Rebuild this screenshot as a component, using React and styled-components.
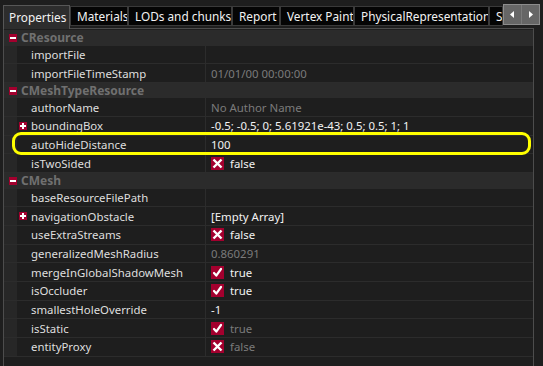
import React from 'react';
import styled, { createGlobalStyle } from 'styled-components';

const GlobalStyle = createGlobalStyle`
  html, body {
    margin: 0;
    padding: 0;
    background: #1e1e1e;
  }
  body {
    font-family: "Noto Sans", "Liberation Sans", sans-serif;
    font-size: 11.4px;
  }
`;

const Window = styled.div`
  width: 543px;
  height: 366px;
  background: #1e1e1e;
  overflow: hidden;
  display: flex;
  flex-direction: column;
`;

const TabStrip = styled.div`
  display: flex;
  align-items: flex-end;
  height: 28px;
  padding-left: 3px;
  position: relative;
  z-index: 2;
`;

const Tab = styled.div`
  flex: 0 0 auto;
  width: ${(p) => p.w}px;
  box-sizing: border-box;
  height: ${(p) => (p.active ? 24 : 20)}px;
  margin-bottom: ${(p) => (p.active ? -1 : 2)}px;
  background: ${(p) => (p.active ? '#2d2d2d' : '#050505')};
  border: 1px solid ${(p) => (p.active ? '#575757' : '#3a3a3a')};
  border-bottom: ${(p) => (p.active ? 'none' : '1px solid #3a3a3a')};
  color: #f2f2f2;
  font-size: 11.8px;
  line-height: ${(p) => (p.active ? 22 : 18)}px;
  padding-left: ${(p) => (p.active ? 5 : 6)}px;
  white-space: nowrap;
  overflow: hidden;
`;

const ScrollButtons = styled.div`
  display: flex;
  margin-left: auto;
  margin-right: 6px;
  margin-bottom: 3px;
  height: 19px;
  background: #7a7a7a;
  border: 1px solid #8c8c8c;
  gap: 1px;
`;

const ScrollBtn = styled.div`
  width: 17px;
  background: #666;
  display: flex;
  align-items: center;
  justify-content: center;
`;

const Panel = styled.div`
  position: relative;
  margin-left: 3px;
  width: 531px;
  flex: 1;
  border: 1px solid #4d4d4d;
  border-bottom: none;
  box-sizing: border-box;
  background: #1e1e1e;
  padding-top: 1px;
`;

const CategoryRow = styled.div`
  display: flex;
  align-items: center;
  height: 15.5px;
  background: #2b2b2b;
  padding-left: 5px;
  gap: 4px;
  color: #707070;
  font-weight: bold;
  font-size: 12px;
`;

const ToggleBox = styled.span`
  width: 8px;
  height: 8px;
  background: #a3002e;
  display: inline-flex;
  align-items: center;
  justify-content: center;
  flex: 0 0 auto;
  position: relative;
  &::before {
    content: '';
    position: absolute;
    width: 6px;
    height: 2px;
    background: #fff;
  }
  &::after {
    content: '';
    position: absolute;
    width: 2px;
    height: 6px;
    background: #fff;
    display: ${(p) => (p.open ? 'none' : 'block')};
  }
`;

const PropRow = styled.div`
  display: grid;
  grid-template-columns: 13px 189px 1fr;
  height: 18.7px;
  box-sizing: border-box;
  border-bottom: 1px solid #2c2c2c;
`;

const Gutter = styled.div`
  background: #272727;
`;

const NameCell = styled.div`
  display: flex;
  align-items: center;
  gap: 4px;
  padding-left: 2px;
  border-right: 1px solid #2c2c2c;
  color: #dedede;
  white-space: nowrap;
  overflow: hidden;
`;

const ExpandSlot = styled.span`
  width: 8px;
  flex: 0 0 auto;
  display: inline-flex;
`;

const ValueCell = styled.div`
  display: flex;
  align-items: center;
  gap: 6px;
  padding-left: 5px;
  color: ${(p) => (p.dim ? '#7b7b7b' : '#f2f2f2')};
  white-space: nowrap;
  overflow: hidden;
`;

const CheckBox = styled.span`
  width: 13px;
  height: 13px;
  background: #a3002e;
  display: inline-flex;
  align-items: center;
  justify-content: center;
  flex: 0 0 auto;
`;

const Highlight = styled.div`
  position: absolute;
  left: 8px;
  top: 103px;
  width: 519px;
  height: 23px;
  box-sizing: border-box;
  border: 3px solid #ffff00;
  border-radius: 9px;
  pointer-events: none;
`;

const tabs = [
  { label: 'Properties', w: 67, active: true },
  { label: 'Materials', w: 58 },
  { label: 'LODs and chunks', w: 104 },
  { label: 'Report', w: 48 },
  { label: 'Vertex Paint', w: 74 },
  { label: 'PhysicalRepresentation', w: 135 },
  { label: 'S', w: 14 },
];

const rows = [
  { cat: 'CResource' },
  { name: 'importFile' },
  { name: 'importFileTimeStamp', value: '01/01/00 00:00:00', dim: true },
  { cat: 'CMeshTypeResource' },
  { name: 'authorName', value: 'No Author Name', dim: true },
  { name: 'boundingBox', value: '-0.5; -0.5; 0; 5.61921e-43; 0.5; 0.5; 1; 1', expand: true },
  { name: 'autoHideDistance', value: '100' },
  { name: 'isTwoSided', value: 'false', check: false },
  { cat: 'CMesh' },
  { name: 'baseResourceFilePath' },
  { name: 'navigationObstacle', value: '[Empty Array]', expand: true },
  { name: 'useExtraStreams', value: 'false', check: false },
  { name: 'generalizedMeshRadius', value: '0.860291', dim: true },
  { name: 'mergeInGlobalShadowMesh', value: 'true', check: true },
  { name: 'isOccluder', value: 'true', check: true },
  { name: 'smallestHoleOverride', value: '-1' },
  { name: 'isStatic', value: 'true', check: true, dim: true },
  { name: 'entityProxy', value: 'false', check: false, dim: true },
];

const Tick = () => (
  <svg width="11" height="11" viewBox="0 0 11 11">
    <path d="M2 6 L4.3 8.6 L9 2" fill="none" stroke="#fff" strokeWidth="2.2" strokeLinecap="round" strokeLinejoin="round" />
  </svg>
);

const Cross = () => (
  <svg width="11" height="11" viewBox="0 0 11 11">
    <path d="M1.5 1.5 L9.5 9.5 M9.5 1.5 L1.5 9.5" fill="none" stroke="#fff" strokeWidth="2.4" />
  </svg>
);

const Arrow = ({ dir }) => (
  <svg width="5" height="7" viewBox="0 0 5 7">
    <path d={dir === 'left' ? 'M4 0 L0 3.5 L4 7 Z' : 'M1 0 L5 3.5 L1 7 Z'} fill="#fff" />
  </svg>
);

export default function App() {
  return (
    <Window>
      <GlobalStyle />
      <TabStrip>
        {tabs.map((t) => (
          <Tab key={t.label} w={t.w} active={t.active}>
            {t.label}
          </Tab>
        ))}
        <ScrollButtons>
          <ScrollBtn><Arrow dir="left" /></ScrollBtn>
          <ScrollBtn><Arrow dir="right" /></ScrollBtn>
        </ScrollButtons>
      </TabStrip>
      <Panel>
        {rows.map((r, i) =>
          r.cat ? (
            <CategoryRow key={i}>
              <ToggleBox open />
              {r.cat}
            </CategoryRow>
          ) : (
            <PropRow key={i}>
              <Gutter />
              <NameCell>
                <ExpandSlot>{r.expand && <ToggleBox />}</ExpandSlot>
                {r.name}
              </NameCell>
              <ValueCell dim={r.dim}>
                {r.check !== undefined && (
                  <CheckBox>{r.check ? <Tick /> : <Cross />}</CheckBox>
                )}
                {r.value}
              </ValueCell>
            </PropRow>
          )
        )}
        <Highlight />
      </Panel>
    </Window>
  );
}
